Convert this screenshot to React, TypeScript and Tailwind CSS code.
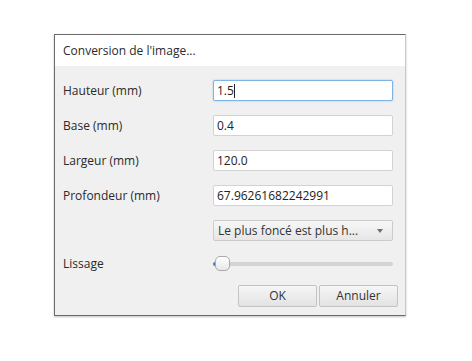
const font = { fontFamily: '"Open Sans", "Noto Sans", sans-serif' };

const fields = [
  { label: 'Hauteur (mm)', value: '1.5', focused: true },
  { label: 'Base (mm)', value: '0.4' },
  { label: 'Largeur (mm)', value: '120.0' },
  { label: 'Profondeur (mm)', value: '67.96261682242991' },
];

export default function App() {
  return (
    <div className="w-[472px] h-[361px] bg-white pt-[34px] pl-[54px] text-[12px] text-[#222]" style={font}>
      <div className="w-[352px] border border-[#6b6b6b] border-r-[#c8c8c8] shadow-[0_1px_2px_rgba(0,0,0,0.25)]">
        <div className="h-[31px] bg-white flex items-center pl-[8px] text-[#2a2a2a]">Conversion de l'image...</div>
        <div className="bg-[#f0f0f0] pt-[14px] pb-[8px]">
          <div className="flex flex-col gap-[14px] pl-[8px] pr-[12px]">
            {fields.map((f) => (
              <div key={f.label} className="flex items-center">
                <span className="w-[150px] text-[#2a2a2a]">{f.label}</span>
                <div
                  className={`flex-1 h-[21px] bg-white flex items-center px-[3px] rounded-[2px] border ${
                    f.focused ? 'border-[#7fb2e6] shadow-[0_0_2px_rgba(90,150,220,0.5)]' : 'border-[#d2d2d2]'
                  }`}
                >
                  <span>{f.value}</span>
                  {f.focused && <span className="w-px h-[14px] bg-[#222]" />}
                </div>
              </div>
            ))}
            <div className="flex items-center">
              <span className="w-[150px]" />
              <div className="flex-1 h-[21px] flex items-center justify-between px-[4px] rounded-[2px] border border-[#cbcbcb] bg-gradient-to-b from-[#f7f7f7] to-[#e6e6e6] text-[#333]">
                <span>Le plus foncé est plus h...</span>
                <svg width="6" height="4" viewBox="0 0 6 4" className="mr-[5px]">
                  <path d="M0 0 L6 0 L3 4 Z" fill="#6f6f6f" />
                </svg>
              </div>
            </div>
          </div>
          <div className="flex items-center pl-[8px] pr-[12px] mt-[15px] h-[16px]">
            <span className="w-[150px] text-[#2a2a2a]">Lissage</span>
            <div className="flex-1 relative h-[16px] flex items-center">
              <div className="w-full h-[4px] rounded-full bg-[#d3d3d3]" />
              <div className="absolute left-0 top-[6px] w-[4px] h-[4px] rounded-full bg-[#4d7fb8]" />
              <div className="absolute left-[2px] top-0 w-[15px] h-[15px] rounded-[5px] bg-gradient-to-b from-white to-[#e8e8e8] border border-[#a9a9a9]" />
            </div>
          </div>
          <div className="flex justify-end gap-[2px] pr-[7px] mt-[13px]">
            <button className="w-[79px] h-[22px] rounded-[2px] border border-[#c3c3c3] bg-gradient-to-b from-[#f6f6f6] to-[#e3e3e3] text-[#333]">OK</button>
            <button className="w-[79px] h-[22px] rounded-[2px] border border-[#c3c3c3] bg-gradient-to-b from-[#f6f6f6] to-[#e3e3e3] text-[#333]">Annuler</button>
          </div>
        </div>
      </div>
    </div>
  );
}
